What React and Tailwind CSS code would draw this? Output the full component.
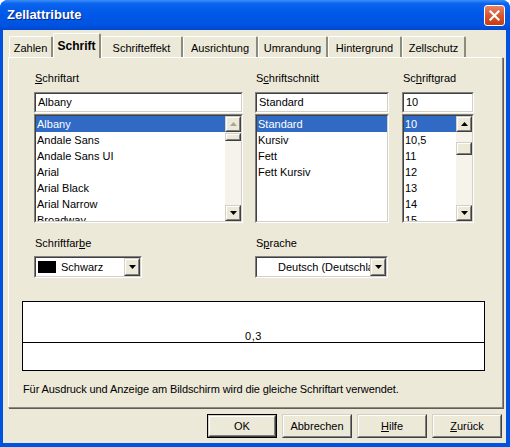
import React from "react"

const tabs = [
    { label: "Zahlen", w: "w-[44px]" },
    { label: "Schrift", w: "w-[48px]", active: true },
    { label: "Schrifteffekt", w: "w-[82px]" },
    { label: "Ausrichtung", w: "w-[75px]" },
    { label: "Umrandung", w: "w-[70px]" },
    { label: "Hintergrund", w: "w-[74px]" },
    { label: "Zellschutz", w: "w-[64px]" },
]

const fonts = ["Albany", "Andale Sans", "Andale Sans UI", "Arial", "Arial Black", "Arial Narrow", "Broadway"]
const styles = ["Standard", "Kursiv", "Fett", "Fett Kursiv"]
const sizes = ["10", "10,5", "11", "12", "13", "14", "15"]

function Sunken({ className = "", children }) {
    return (
        <div className={`border border-[#808080] border-r-white border-b-white ${className}`}>
            <div className="h-full w-full border border-[#404040] border-r-[#d4d0c8] border-b-[#d4d0c8] bg-white overflow-hidden">
                {children}
            </div>
        </div>
    )
}

function Raised({ className = "", children }) {
    return (
        <div className={`border border-[#d4d0c8] border-r-[#404040] border-b-[#404040] ${className}`}>
            <div className="h-full w-full border border-white border-r-[#808080] border-b-[#808080] bg-[#ece9d8] flex items-center justify-center">
                {children}
            </div>
        </div>
    )
}

function Arrow({ up, disabled }) {
    return (
        <svg width="7" height="4" viewBox="0 0 7 4">
            <polygon points={up ? "3.5,0 7,4 0,4" : "0,0 7,0 3.5,4"} fill={disabled ? "#a7a597" : "#000"} />
        </svg>
    )
}

function ScrollBar({ thumbTop, thumbH, upDisabled }) {
    return (
        <div className="w-[16px] h-full flex flex-col bg-[#f5f3ea] shrink-0">
            <Raised className="h-[16px] w-[16px]"><Arrow up disabled={upDisabled} /></Raised>
            <Raised className={`w-[16px] ${thumbTop} ${thumbH}`} />
            <div className="flex-1" />
            <Raised className="h-[16px] w-[16px]"><Arrow /></Raised>
        </div>
    )
}

function ListRows({ items }) {
    return (
        <div className="flex-1 h-full overflow-hidden">
            {items.map((t, i) => (
                <div
                    key={t}
                    className={`h-[16px] leading-[16px] pl-[1px] whitespace-nowrap ${i === 0 ? "bg-[#316ac5] text-white" : ""}`}
                >
                    {t}
                </div>
            ))}
        </div>
    )
}

function Label({ children }) {
    return <div className="h-[14px] leading-[14px] pl-px">{children}</div>
}

function Button({ children, isDefault }) {
    return (
        <div className={`w-[70px] h-[24px] ${isDefault ? "border border-[#000]" : ""}`}>
            <Raised className="h-full w-full">
                <span className="leading-[14px]">{children}</span>
            </Raised>
        </div>
    )
}

export default function App() {
    return (
        <div className="w-[510px] h-[447px] bg-[#0053e1] rounded-t-[8px] flex flex-col overflow-hidden font-['Liberation_Sans',Arial,sans-serif] text-[11px] text-black">
            {/* title bar */}
            <div className="h-[30px] shrink-0 flex items-center justify-between pl-[7px] pr-[5px] bg-[linear-gradient(to_bottom,#3d8ff7_0%,#0a64ee_12%,#0058e8_45%,#0053e1_85%,#0047cc_100%)]">
                <span className="text-white font-bold text-[13px] [text-shadow:1px_1px_0_#0a2a86]">Zellattribute</span>
                <div className="w-[21px] h-[21px] rounded-[3px] border border-white bg-[linear-gradient(to_bottom,#ea8466,#d9542f_50%,#c53c14)] flex items-center justify-center">
                    <svg width="11" height="11" viewBox="0 0 11 11">
                        <path d="M1.5 1.5 L9.5 9.5 M9.5 1.5 L1.5 9.5" stroke="white" strokeWidth="2.2" strokeLinecap="square" />
                    </svg>
                </div>
            </div>

            <div className="flex-1 ml-[3px] mr-[4px] mb-[4px] bg-[#ece9d8] flex flex-col">
                {/* tabs */}
                <div className="h-[27px] shrink-0 flex items-end pl-[6px]">
                    {tabs.map(t => (
                        <div
                            key={t.label}
                            className={`${t.w} flex justify-center rounded-t-[2px] border-t border-l border-white border-r-2 border-r-[#8d8a7e] bg-[#ece9d8] ${t.active ? "h-[25px] -mb-px relative z-10 pt-[5px] font-bold text-[12px]" : "h-[21px] pt-[4px]"}`}
                        >
                            <span className="leading-[14px]">{t.label}</span>
                        </div>
                    ))}
                </div>

                {/* panel */}
                <div className="ml-[5px] w-[495px] h-[351px] border border-white border-r-[#8d8a7e] border-b-[#8d8a7e] shadow-[1px_1px_0_#5f5d55] flex flex-col">
                    <div className="flex ml-[25px] mt-[13px] gap-[12px]">
                        <div className="w-[209px] flex flex-col">
                            <Label><u>S</u>chriftart</Label>
                            <Sunken className="mt-[7px] h-[21px]">
                                <div className="pl-[2px] leading-[17px]">Albany</div>
                            </Sunken>
                            <Sunken className="mt-px h-[109px]">
                                <div className="flex h-full">
                                    <ListRows items={fonts} />
                                    <ScrollBar thumbTop="mt-px" thumbH="h-[8px]" upDisabled />
                                </div>
                            </Sunken>
                        </div>
                        <div className="w-[134px] flex flex-col">
                            <Label>S<u>c</u>hriftschnitt</Label>
                            <Sunken className="mt-[7px] h-[21px]">
                                <div className="pl-[2px] leading-[17px]">Standard</div>
                            </Sunken>
                            <Sunken className="mt-px h-[109px]">
                                <ListRows items={styles} />
                            </Sunken>
                        </div>
                        <div className="w-[72px] flex flex-col ml-px">
                            <Label>Sc<u>h</u>riftgrad</Label>
                            <Sunken className="mt-[7px] h-[21px]">
                                <div className="pl-[2px] leading-[17px]">10</div>
                            </Sunken>
                            <Sunken className="mt-px h-[109px]">
                                <div className="flex h-full">
                                    <ListRows items={sizes} />
                                    <ScrollBar thumbTop="mt-[10px]" thumbH="h-[13px]" />
                                </div>
                            </Sunken>
                        </div>
                    </div>

                    <div className="flex ml-[25px] mt-[13px]">
                        <div className="w-[221px] flex flex-col">
                            <Label>Schriftfar<u>b</u>e</Label>
                            <Sunken className="mt-[6px] h-[22px] w-[108px]">
                                <div className="flex h-full items-center bg-white">
                                    <div className="ml-[2px] w-[18px] h-[12px] bg-black" />
                                    <span className="ml-[5px] flex-1">Schwarz</span>
                                    <Raised className="w-[16px] h-[18px]"><Arrow /></Raised>
                                </div>
                            </Sunken>
                        </div>
                        <div className="flex flex-col">
                            <Label>S<u>p</u>rache</Label>
                            <Sunken className="mt-[6px] h-[22px] w-[133px]">
                                <div className="flex h-full items-center">
                                    <span className="ml-[21px] flex-1 whitespace-nowrap overflow-hidden">Deutsch (Deutschland)</span>
                                    <Raised className="w-[16px] h-[18px] shrink-0"><Arrow /></Raised>
                                </div>
                            </Sunken>
                        </div>
                    </div>

                    <div className="ml-[13px] mt-[23px] w-[463px] h-[70px] border border-black bg-white">
                        <div className="h-[41px] border-b border-black flex items-end justify-center">
                            <span className="leading-[11px] px-[2px] tracking-[0.5px]">0,3</span>
                        </div>
                    </div>

                    <div className="ml-[14px] mt-[11px] leading-[14px] tracking-[-0.1px]">
                        Für Ausdruck und Anzeige am Bildschirm wird die gleiche Schriftart verwendet.
                    </div>
                </div>

                {/* buttons */}
                <div className="mt-[6px] flex justify-end gap-[5px] pr-[4px]">
                    <Button isDefault>OK</Button>
                    <Button>Abbrechen</Button>
                    <Button><u>H</u>ilfe</Button>
                    <Button><u>Z</u>urück</Button>
                </div>
            </div>
        </div>
    )
}
